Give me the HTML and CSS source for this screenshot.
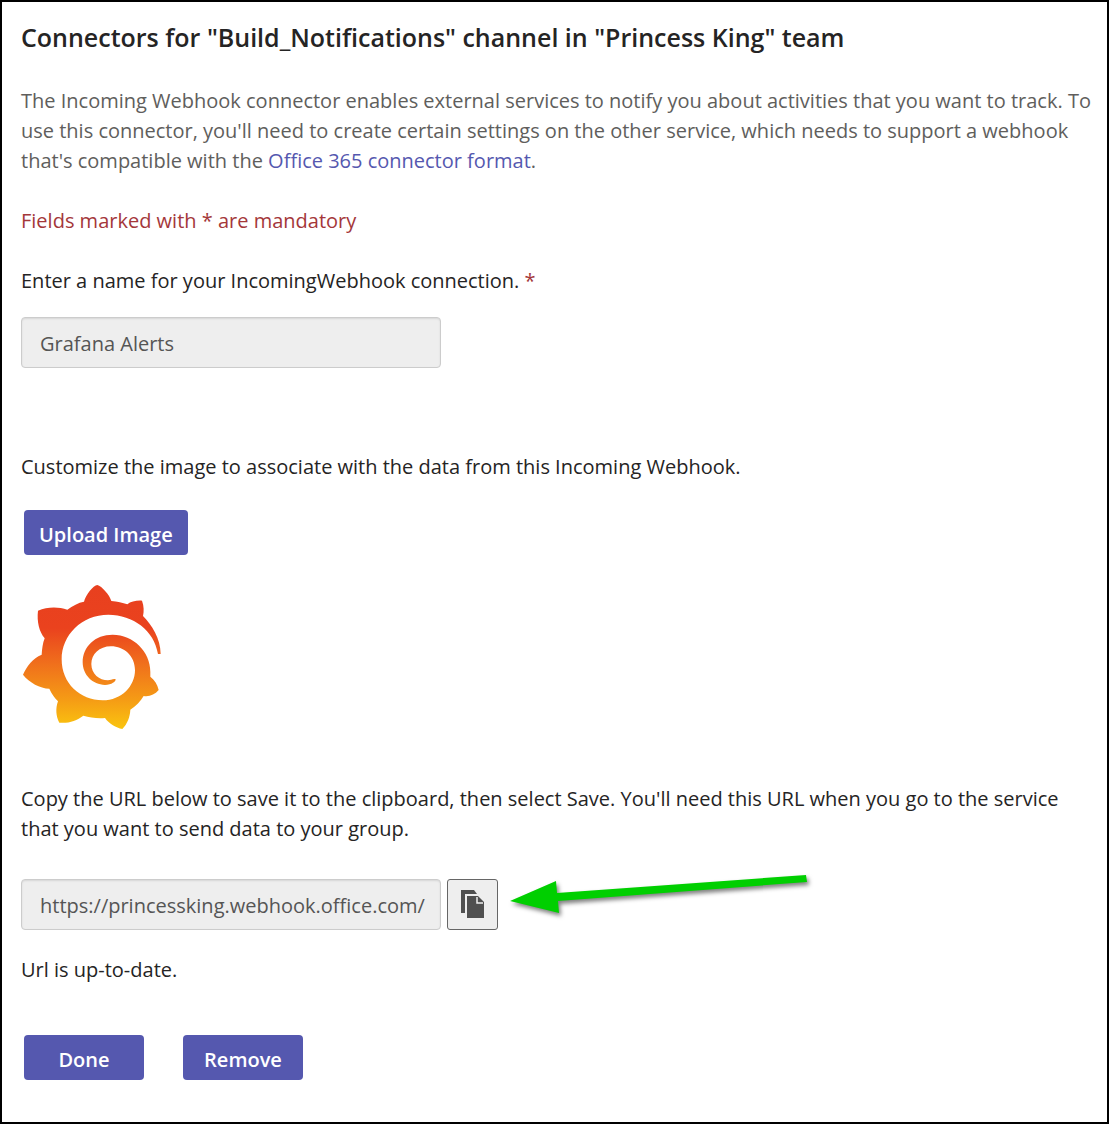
FILE: index.html
```html
<!DOCTYPE html>
<html lang="en">

<head>
	<title>Connectors</title>
	<meta charset="utf-8">
	<meta name="viewport" content="width=device-width, initial-scale=1">
	<link rel="stylesheet" href="styles.css">
</head>

<body>
	<main class="connector">
		<h1 class="title">Connectors for "Build_Notifications" channel in "Princess King" team</h1>
		<p class="intro">The Incoming Webhook connector enables external services to notify you about activities that you want to track. To use this connector, you'll need to create certain settings on the other service, which needs to support a webhook that's compatible with the <a href="#format">Office 365 connector format</a>.</p>
		<p class="mandatory">Fields marked with * are mandatory</p>

		<form class="form">
			<label for="name">Enter a name for your IncomingWebhook connection. <span class="star">*</span></label>
			<input class="field" id="name" type="text" value="Grafana Alerts" readonly>

			<p class="customize">Customize the image to associate with the data from this Incoming Webhook.</p>
			<button class="btn upload" type="button">Upload Image</button>
			<svg class="logo" viewBox="36 42 420 438" role="img" aria-label="Grafana">
				<defs>
					<linearGradient id="flame" gradientUnits="userSpaceOnUse" x1="0" y1="45" x2="0" y2="477">
						<stop offset="0" stop-color="#e8401f" />
						<stop offset="0.3" stop-color="#ea421e" />
						<stop offset="0.55" stop-color="#f0701c" />
						<stop offset="0.8" stop-color="#f59c15" />
						<stop offset="1" stop-color="#fac50f" />
					</linearGradient>
				</defs>
				<path fill="url(#flame)" d="M262 45C275 48 299 75 304 93C322 94 338 98 352 103C362 94 380 91 396 92C402 108 402 124 399 138C425 165 452 205 452 252L444 252C432 180 370 135 295 134C215 134 155 195 155 268C155 340 210 391 278 391C335 391 375 348 375 300C375 258 342 229 303 229C268 229 244 253 244 282C244 312 268 331 294 331C302 331 310 325 317 328C318 334 305 345 285 345C248 344 218 315 218 277C218 230 255 194 308 194C370 194 421 245 421 305L421 320C434 330 442 343 446 360C434 374 418 381 401 378C392 394 378 408 361 419C360 440 352 462 337 477C318 473 298 462 285 444C262 446 240 443 220 437C200 452 175 461 148 458C138 440 136 415 144 394C134 384 125 372 118 356C90 355 58 338 39 314C50 290 68 264 95 254C96 237 98 220 104 205C88 185 80 155 84 122C112 110 145 110 172 119C188 107 205 98 222 95C226 76 250 46 262 45Z" />
			</svg>

			<label for="url">Copy the URL below to save it to the clipboard, then select Save. You'll need this URL when you go to the service that you want to send data to your group.</label>
			<div class="url-row">
				<input class="field" id="url" type="text" value="https://princessking.webhook.office.com/" readonly>
				<button class="copy" type="button" aria-label="Copy">
					<svg viewBox="0 0 24 30" width="24" height="30">
						<path fill="#505050" d="M0 0H13L16 4H4V23H0Z" />
						<path fill="#505050" d="M6 6H17L23 12V28H6Z" />
						<path fill="none" stroke="#eee" stroke-width="1.5" d="M16 7V13H22" />
					</svg>
				</button>
				<svg class="arrow" viewBox="0 0 300 48" aria-hidden="true">
					<path d="M0 25L46 5L47 17L296 -1L297 6L48 25L49 37Z" />
				</svg>
			</div>
			<p class="status">Url is up-to-date.</p>

			<div class="actions">
				<button class="btn" type="button">Done</button>
				<button class="btn" type="button">Remove</button>
			</div>
		</form>
	</main>
</body>

</html>
```
FILE: styles.css
```css
* {
	box-sizing: border-box;
}

body {
	margin: 0;
	background-color: #fff;
	color: #252424;
	font-family: "Open Sans", "Noto Sans", sans-serif;
	font-size: 20px;
	line-height: 30px;
}

p {
	margin: 0;
}

.connector {
	min-height: 100vh;
	padding: 20px 14px 42px 19px;
	border: 2px solid #000;
}

.title {
	margin: 0 0 34px;
	font-size: 25px;
	font-weight: 600;
	line-height: 30px;
}

.intro {
	color: #605e5c;
}

.intro a {
	color: #5558af;
	text-decoration: none;
}

.mandatory {
	margin: 30px 0;
	color: #a4373a;
}

.star {
	color: #a4373a;
}

.form {
	display: flex;
	flex-direction: column;
	align-items: flex-start;
}

.field {
	width: 420px;
	max-width: 100%;
	height: 51px;
	padding: 2px 12px 0 18px;
	border: 1px solid #ccc;
	border-radius: 4px;
	background-color: #eee;
	box-shadow: inset 0 1px 2px rgba(0, 0, 0, 0.1);
	color: #555;
	font: inherit;
}

#name {
	margin-top: 21px;
}

.customize {
	margin-top: 84px;
}

.btn {
	min-width: 120px;
	height: 45px;
	padding: 4px 15px 0;
	border: none;
	border-radius: 4px;
	background-color: #5558af;
	color: #fff;
	font: inherit;
	font-weight: 600;
}

.upload {
	margin: 28px 0 29px 3px;
}

.logo {
	width: 140px;
	height: 146px;
	margin: 0 0 54px 1px;
}

.url-row {
	display: flex;
	align-items: center;
	width: 100%;
	margin: 35px 0 25px;
}

.copy {
	display: flex;
	align-items: center;
	justify-content: center;
	flex: none;
	width: 51px;
	height: 51px;
	margin-left: 6px;
	padding: 0;
	border: 1px solid #666;
	border-radius: 3px;
	background-color: #eee;
}

.arrow {
	width: 300px;
	height: 48px;
	margin: -10px 0 0 12px;
	fill: #00cf00;
	overflow: visible;
	filter: drop-shadow(2px 3px 2px rgba(0, 0, 0, 0.5));
}

.actions {
	display: flex;
	gap: 39px;
	margin: 50px 0 0 3px;
}
```
